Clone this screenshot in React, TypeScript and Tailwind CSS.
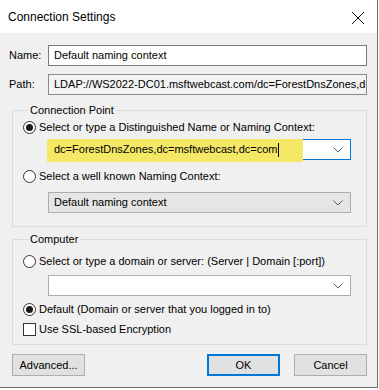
import React from "react";

const Chevron = () => (
  <svg width="10" height="6" viewBox="0 0 10 6" className="shrink-0">
    <polyline points="0.5,0.5 5,5 9.5,0.5" fill="none" stroke="#5a5a5a" strokeWidth="1" />
  </svg>
);

const Radio = ({ checked }: { checked?: boolean }) => (
  <span className="w-[13px] h-[13px] rounded-full border border-[#333333] bg-white flex items-center justify-center shrink-0">
    {checked && <span className="w-[7px] h-[7px] rounded-full bg-[#1a1a1a]" />}
  </span>
);

export default function App() {
  return (
    <div className="w-[379px] h-[390px] bg-white">
      <div
        className="w-[378px] h-[388px] border-r border-b border-[#6f6f6f] bg-[#f0f0f0] flex flex-col text-[11px] text-black leading-[15px]"
        style={{ fontFamily: '"Liberation Sans", Arial, sans-serif' }}
      >
        <div className="h-[33px] bg-white flex items-center justify-between pl-[8px] pr-[12px] pt-[2px] shrink-0">
          <span className="text-[12px]">Connection Settings</span>
          <svg width="14" height="14" viewBox="0 0 14 14">
            <line x1="1" y1="1" x2="13" y2="13" stroke="#111" strokeWidth="1" />
            <line x1="13" y1="1" x2="1" y2="13" stroke="#111" strokeWidth="1" />
          </svg>
        </div>
        <div className="pl-[9px] pr-[10px] pt-[12px] flex flex-col">
          <div className="flex items-center">
            <span className="w-[39px]">Name:</span>
            <div className="flex-1 h-[21px] border border-[#7a7a7a] bg-white flex items-center px-[5px]">
              Default naming context
            </div>
          </div>
          <div className="flex items-center mt-[8px]">
            <span className="w-[39px]">Path:</span>
            <div className="flex-1 h-[21px] border border-[#8a8a8a] bg-[#f3f3f3] flex items-center px-[5px] overflow-hidden whitespace-nowrap">
              LDAP://WS2022-DC01.msftwebcast.com/dc=ForestDnsZones,dc=msftwebcast,dc=com
            </div>
          </div>

          <fieldset className="ml-[3px] mt-[8px] border border-[#dcdcdc] pl-[10px] pr-[15px] pb-[13px]">
            <legend className="ml-[5px] px-[2px]">Connection Point</legend>
            <div className="flex items-center gap-[3px] mt-[2px]">
              <Radio checked />
              <span>Select or type a Distinguished Name or Naming Context:</span>
            </div>
            <div className="relative ml-[25px] mt-[4px] h-[21px] border border-[#0078d7] bg-white flex items-center justify-between pl-[5px] pr-[7px]">
              <span className="absolute left-[-2px] top-[-1px] w-[256px] h-[23px] bg-[#f5e867]" />
              <span className="relative flex items-center">
                dc=ForestDnsZones,dc=msftwebcast,dc=com
                <span className="w-px h-[14px] bg-black ml-[1px]" />
              </span>
              <Chevron />
            </div>
            <div className="flex items-center gap-[3px] mt-[9px]">
              <Radio />
              <span>Select a well known Naming Context:</span>
            </div>
            <div className="ml-[25px] mt-[8px] h-[21px] border border-[#adadad] bg-[#e5e5e5] flex items-center justify-between pl-[5px] pr-[7px]">
              <span>Default naming context</span>
              <Chevron />
            </div>
          </fieldset>

          <fieldset className="ml-[3px] mt-[5px] border border-[#dcdcdc] pl-[10px] pr-[15px] pb-[7px]">
            <legend className="ml-[5px] px-[2px]">Computer</legend>
            <div className="flex items-center gap-[3px] mt-[7px]">
              <Radio />
              <span>Select or type a domain or server: (Server | Domain [:port])</span>
            </div>
            <div className="ml-[25px] mt-[6px] h-[21px] border border-[#adadad] bg-white flex items-center justify-end pl-[5px] pr-[7px]">
              <Chevron />
            </div>
            <div className="flex items-center gap-[3px] mt-[6px]">
              <Radio checked />
              <span>Default (Domain or server that you logged in to)</span>
            </div>
            <div className="flex items-center gap-[3px] mt-[5px]">
              <span className="w-[13px] h-[13px] border border-[#333333] bg-white shrink-0" />
              <span>Use SSL-based Encryption</span>
            </div>
          </fieldset>

          <div className="flex items-center mt-[9px] ml-[3px]">
            <button className="w-[73px] h-[22px] border border-[#adadad] bg-[#e1e1e1]">Advanced...</button>
            <button className="ml-auto w-[73px] h-[22px] border-2 border-[#0078d7] bg-[#e1e1e1]">OK</button>
            <button className="ml-[14px] w-[73px] h-[22px] border border-[#adadad] bg-[#e1e1e1]">Cancel</button>
          </div>
        </div>
      </div>
    </div>
  );
}
